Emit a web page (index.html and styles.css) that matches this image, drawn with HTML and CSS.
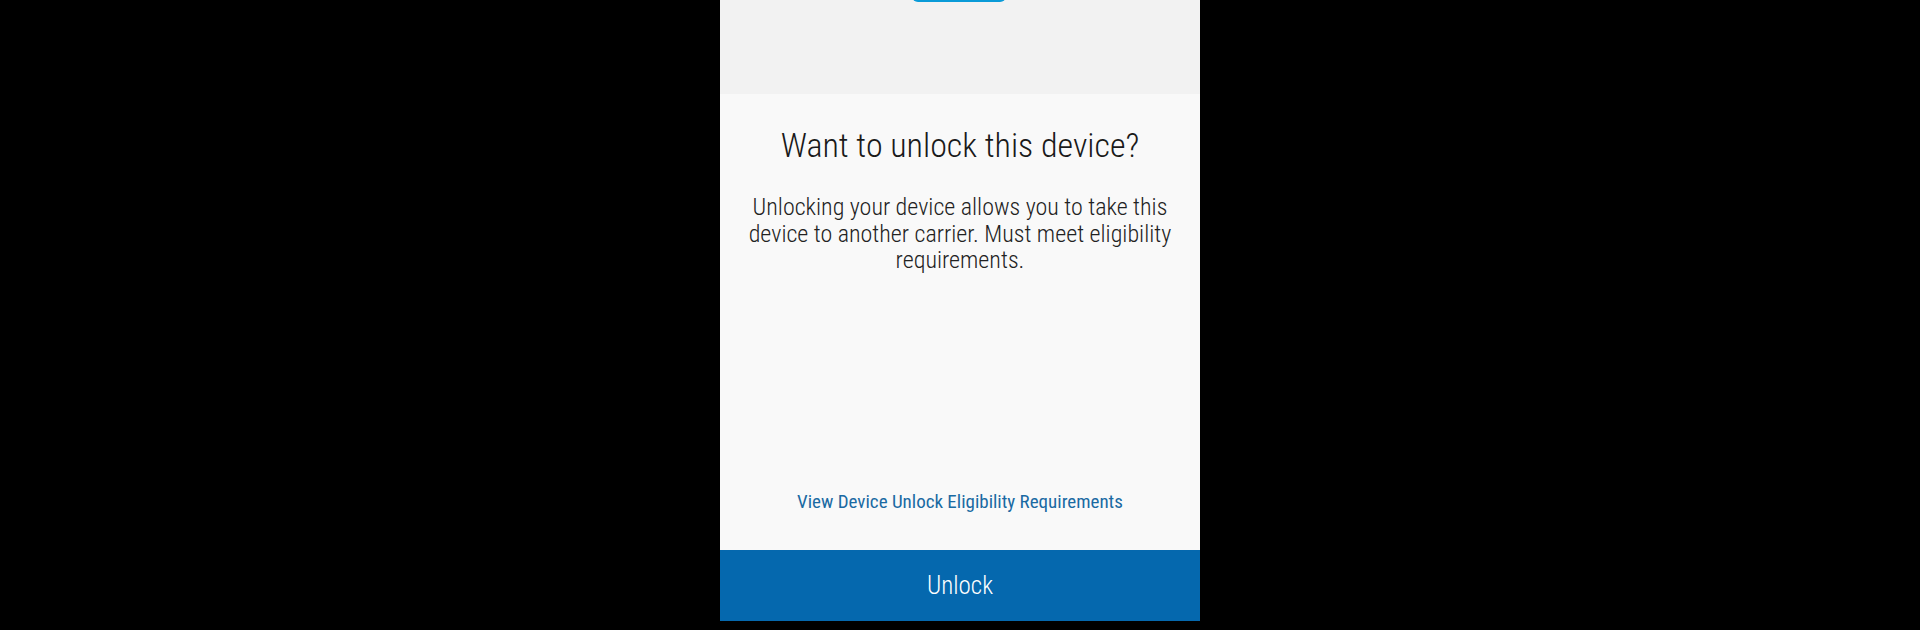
FILE: index.html
```html
<!DOCTYPE html>
<html lang="en">
<head>
<meta charset="utf-8">
<title>Unlock device</title>
<link rel="stylesheet" href="styles.css">
</head>
<body>
<div class="screen">
  <div class="hero">
    <div class="pill"></div>
  </div>
  <div class="content">
    <h1 class="title">Want to unlock this device?</h1>
    <p class="desc">Unlocking your device allows you to take this device to another carrier. Must meet eligibility requirements.</p>
    <div class="spacer"></div>
    <a class="link" href="#">View Device Unlock Eligibility Requirements</a>
  </div>
  <button class="unlock">Unlock</button>
</div>
</body>
</html>
```
FILE: styles.css
```css
html, body {
  margin: 0;
  padding: 0;
  background: #000;
  height: 630px;
  overflow: hidden;
}
.screen {
  width: 480px;
  height: 621px;
  margin: 0 auto;
  display: flex;
  flex-direction: column;
  font-family: "Roboto Condensed", Roboto, sans-serif;
}
.hero {
  height: 94px;
  background: #f2f2f2;
  display: flex;
  justify-content: center;
}
.pill {
  width: 94px;
  height: 12px;
  margin-top: -10px;
  margin-left: -2px;
  background: #0a9bd8;
  border-radius: 8px;
}
.content {
  flex: 1;
  background: #f9f9f9;
  display: flex;
  flex-direction: column;
  align-items: center;
  text-align: center;
  padding: 0 12px;
}
.title {
  margin: 29px 0 0;
  font-weight: 300;
  font-size: 34px;
  line-height: 44px;
  color: #1a1a1a;
}
.desc {
  margin: 27px 0 0;
  font-weight: 300;
  font-size: 24px;
  line-height: 26.5px;
  color: #222;
}
.spacer {
  flex: 1;
}
.link {
  font-size: 19px;
  font-weight: 400;
  color: #1a6aa3;
  text-decoration: none;
  line-height: 24px;
  margin-bottom: 36px;
}
.unlock {
  height: 71px;
  border: none;
  background: #0568ae;
  color: #ffffff;
  font-family: "Roboto Condensed", Roboto, sans-serif;
  font-weight: 300;
  font-size: 25px;
  padding: 0;
}
```
